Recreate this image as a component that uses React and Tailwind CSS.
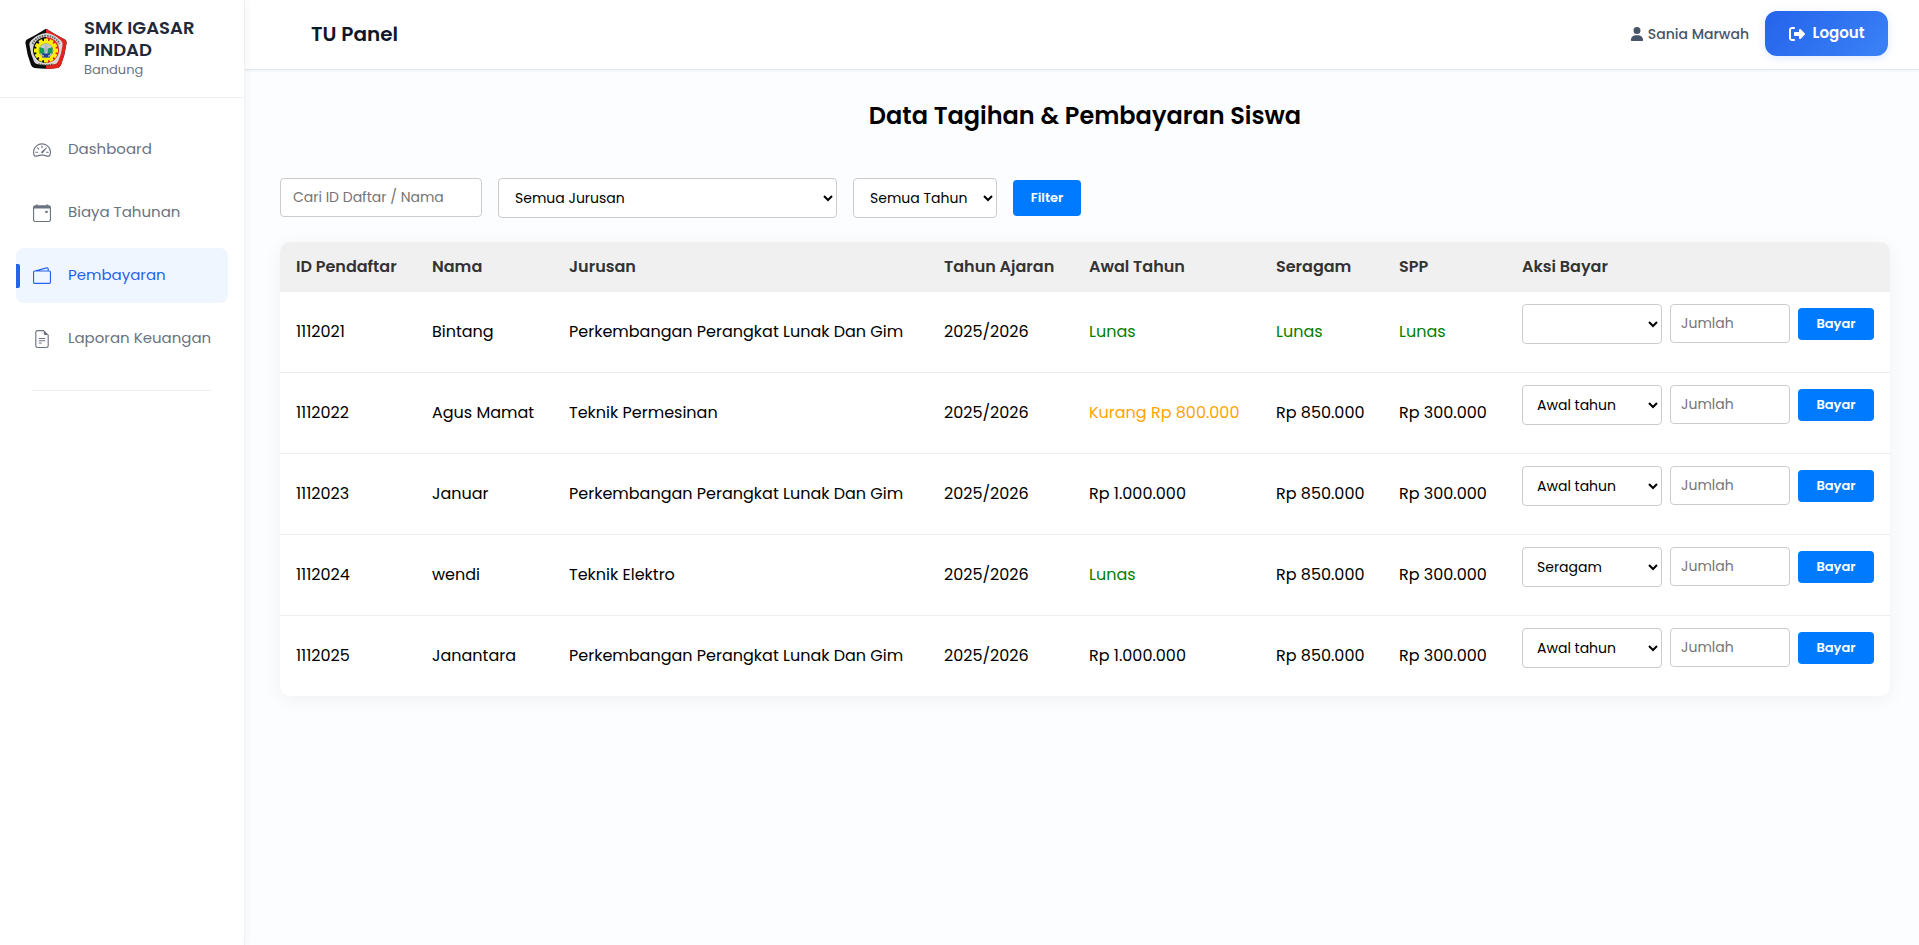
import { BsSpeedometer2, BsCalendarEvent, BsWallet2, BsFileEarmarkText } from "react-icons/bs";
import { FaUser, FaRightFromBracket } from "react-icons/fa6";

const menu = [
  { label: "Dashboard", icon: BsSpeedometer2 },
  { label: "Biaya Tahunan", icon: BsCalendarEvent },
  { label: "Pembayaran", icon: BsWallet2, active: true },
  { label: "Laporan Keuangan", icon: BsFileEarmarkText },
];

const columns = [
  { label: "ID Pendaftar", width: "w-[136px]" },
  { label: "Nama", width: "w-[137px]" },
  { label: "Jurusan", width: "w-auto" },
  { label: "Tahun Ajaran", width: "w-[145px]" },
  { label: "Awal Tahun", width: "w-[187px]" },
  { label: "Seragam", width: "w-[123px]" },
  { label: "SPP", width: "w-[123px]" },
  { label: "Aksi Bayar", width: "w-[384px]" },
];

const rows = [
  { id: "1112021", nama: "Bintang", jurusan: "Perkembangan Perangkat Lunak Dan Gim", awal: "Lunas", seragam: "Lunas", spp: "Lunas", jenis: "" },
  { id: "1112022", nama: "Agus Mamat", jurusan: "Teknik Permesinan", awal: "Kurang Rp 800.000", seragam: "Rp 850.000", spp: "Rp 300.000", jenis: "Awal tahun" },
  { id: "1112023", nama: "Januar", jurusan: "Perkembangan Perangkat Lunak Dan Gim", awal: "Rp 1.000.000", seragam: "Rp 850.000", spp: "Rp 300.000", jenis: "Awal tahun" },
  { id: "1112024", nama: "wendi", jurusan: "Teknik Elektro", awal: "Lunas", seragam: "Rp 850.000", spp: "Rp 300.000", jenis: "Seragam" },
  { id: "1112025", nama: "Janantara", jurusan: "Perkembangan Perangkat Lunak Dan Gim", awal: "Rp 1.000.000", seragam: "Rp 850.000", spp: "Rp 300.000", jenis: "Awal tahun" },
];

function statusColor(value) {
  if (value === "Lunas") return "text-[#008000]";
  if (value.startsWith("Kurang")) return "text-[#ffa500]";
  return "";
}

function Logo() {
  const teeth = [0, 30, 60, 90, 120, 150, 180, 210, 240, 270, 300, 330];
  return (
    <svg viewBox="0 0 88 88" className="size-11 shrink-0" aria-hidden="true">
      <path d="M44 6 Q46 5 50 9 Q66 19 82 27 Q86 29 85 35 Q82 58 74 78 Q72 83 67 84 Q44 87 21 84 Q16 83 14 78 Q6 58 3 35 Q2 29 6 27 Q22 19 38 9 Q42 5 44 6Z" fill="#0b0b0b" />
      <path d="M44 6 Q46 5 50 9 Q66 19 82 27 Q86 29 85 35 Q82 58 74 78 Q72 83 67 84 Q56 86 44 86Z" fill="#e0251f" />
      <path d="M44 14 Q60 15 74 29 Q78 33 77 39 Q75 56 68 71 Q66 75 62 76 Q44 80 26 76 Q22 75 20 71 Q13 56 11 39 Q10 33 14 29 Q28 15 44 14Z" fill="#d9d9d9" />
      <path d="M17 36 Q24 21 44 19 Q64 21 71 36" fill="none" stroke="#666" strokeWidth="4" strokeDasharray="3 2" />
      <path d="M29 76 Q44 80 59 76" fill="none" stroke="#555" strokeWidth="3" strokeDasharray="3 2" />
      <path d="M44 22 A26 26 0 0 0 44 74Z" fill="#0b0b0b" />
      <path d="M44 22 A26 26 0 0 1 44 74Z" fill="#e0251f" />
      <g fill="#f7ee0a">
        {teeth.map((a) => (
          <rect key={a} x="40" y="25" width="8" height="10" rx="1" transform={`rotate(${a} 44 49)`} />
        ))}
        <circle cx="44" cy="49" r="20" />
      </g>
      <circle cx="44" cy="49" r="14" fill="#c9ccd0" stroke="#8a8a50" strokeWidth="1" />
      <path d="M31 43 Q37 42 41 46 V57 Q36 54 31 55Z M57 43 Q51 42 47 46 V57 Q52 54 57 55Z" fill="#129a58" />
      <path d="M41 37 H47 V53 H41Z" fill="#aeb8c6" />
      <path d="M36 55 H52 V58 L48 59 V61 H52 V63 H36 V61 H40 V59 L36 58Z" fill="#25408f" />
    </svg>
  );
}

function Sidebar() {
  return (
    <aside className="z-10 w-[245px] shrink-0 border-r border-[#f0f1f3] bg-white shadow-[2px_0_8px_rgba(0,0,0,0.04)]">
      <div className="flex items-center gap-4 border-b border-[#f0f1f3] px-6 pt-[17px] pb-[18px]">
        <Logo />
        <div>
          <p className="text-lg leading-[22px] font-semibold text-[#1f2937]">SMK IGASAR PINDAD</p>
          <p className="text-[13px] leading-[18px] text-[#6b7280]">Bandung</p>
        </div>
      </div>
      <nav className="px-4 py-6">
        <ul className="flex flex-col gap-2">
          {menu.map(({ label, icon: Icon, active }) => (
            <li key={label}>
              <a
                href="#"
                aria-current={active ? "page" : undefined}
                className={
                  active
                    ? "relative flex h-[55px] items-center gap-4 rounded-lg bg-[#eff6ff] px-4 text-[#2563eb]"
                    : "relative flex h-[55px] items-center gap-4 rounded-lg px-4 text-[#6b7280]"
                }
              >
                {active && <span className="absolute left-0 h-6 w-1 rounded-r-xs bg-[#2563eb]" />}
                <span className="flex w-5 shrink-0 justify-center">
                  <Icon className="size-[18px]" />
                </span>
                <span className="text-[15px] whitespace-nowrap">{label}</span>
              </a>
            </li>
          ))}
        </ul>
        <hr className="mx-4 mt-6 border-[#f0f1f3]" />
      </nav>
    </aside>
  );
}

function Topbar() {
  return (
    <header className="flex h-[70px] items-center justify-between border-b border-[#e2e8f0] bg-white pr-[31px] pb-0.5 pl-[66px] shadow-[0_1px_3px_rgba(0,0,0,0.05)]">
      <h1 className="text-xl font-semibold text-[#0f172a]">TU Panel</h1>
      <div className="flex items-center gap-4">
        <span className="flex items-center gap-1 text-sm font-medium text-[#475569]">
          <FaUser className="size-3.5" />
          Sania Marwah
        </span>
        <button
          type="button"
          className="flex h-[45px] w-[123px] items-center justify-center gap-2 rounded-xl bg-linear-135 from-[#2563eb] to-[#3b82f6] text-[15px] font-semibold text-white shadow-[0_2px_8px_rgba(37,99,235,0.15)]"
        >
          <FaRightFromBracket className="size-4" />
          Logout
        </button>
      </div>
    </header>
  );
}

function Filters() {
  return (
    <form className="flex items-center gap-4">
      <input
        type="text"
        aria-label="Cari ID Daftar / Nama"
        placeholder="Cari ID Daftar / Nama"
        className="h-[39px] w-[202px] self-start rounded border border-[#cccccc] bg-white px-3 text-sm placeholder:text-[#757575]"
      />
      <select aria-label="Jurusan" className="h-10 w-[339px] rounded border border-[#cccccc] bg-white px-3 text-sm text-black">
        <option>Semua Jurusan</option>
        <option>Perkembangan Perangkat Lunak Dan Gim</option>
        <option>Teknik Permesinan</option>
        <option>Teknik Elektro</option>
      </select>
      <select aria-label="Tahun" className="h-10 w-36 rounded border border-[#cccccc] bg-white px-3 text-sm text-black">
        <option>Semua Tahun</option>
        <option>2025/2026</option>
      </select>
      <button type="submit" className="h-9 w-[68px] rounded bg-[#007bff] pb-px text-[13px] font-semibold text-white">
        Filter
      </button>
    </form>
  );
}

function PayForm({ row }) {
  return (
    <form className="mb-4 flex items-center gap-2">
      <select
        aria-label={`Jenis pembayaran ${row.nama}`}
        defaultValue={row.jenis}
        className="h-10 w-[140px] rounded border border-[#cccccc] bg-white px-2.5 text-sm text-black"
      >
        {row.jenis === "" ? (
          <option value=""></option>
        ) : (
          <>
            <option>Awal tahun</option>
            <option>Seragam</option>
            <option>SPP</option>
          </>
        )}
      </select>
      <input
        type="text"
        aria-label={`Jumlah ${row.nama}`}
        placeholder="Jumlah"
        className="h-[39px] w-[120px] self-start rounded border border-[#cccccc] bg-white px-2.5 text-sm placeholder:text-[#757575]"
      />
      <button type="submit" className="h-8 w-[76px] rounded bg-[#007bff] pb-px text-[13px] font-semibold text-white">
        Bayar
      </button>
    </form>
  );
}

function BillTable() {
  return (
    <div className="overflow-hidden rounded-[10px] bg-white shadow-[0_4px_20px_rgba(0,0,0,0.05)]">
      <table className="w-full table-fixed border-collapse text-left text-base text-black">
        <thead className="bg-[#f0f0f0] text-[#333333]">
          <tr className="border-b border-[#eeeeee]">
            {columns.map((c) => (
              <th key={c.label} scope="col" className={`${c.width} px-4 pt-[13px] pb-3 font-semibold whitespace-nowrap`}>
                {c.label}
              </th>
            ))}
          </tr>
        </thead>
        <tbody>
          {rows.map((r) => (
            <tr key={r.id} className="border-b border-[#eeeeee] whitespace-nowrap last:border-b-0">
              <td className="px-4 py-3">{r.id}</td>
              <td className="px-4 py-3">{r.nama}</td>
              <td className="px-4 py-3">{r.jurusan}</td>
              <td className="px-4 py-3">2025/2026</td>
              <td className={`px-4 py-3 ${statusColor(r.awal)}`}>{r.awal}</td>
              <td className={`px-4 py-3 ${statusColor(r.seragam)}`}>{r.seragam}</td>
              <td className={`px-4 py-3 ${statusColor(r.spp)}`}>{r.spp}</td>
              <td className="px-4 py-3">
                <PayForm row={r} />
              </td>
            </tr>
          ))}
        </tbody>
      </table>
    </div>
  );
}

export default function App() {
  return (
    <div className="flex min-h-screen bg-[#fcfdff] font-[Poppins,Inter,sans-serif]">
      <Sidebar />
      <div className="min-w-0 flex-1">
        <Topbar />
        <main className="flex flex-col pt-7 pr-[29px] pl-[35px]">
          <h2 className="mb-11 text-center text-2xl leading-9 font-semibold text-black">
            Data Tagihan &amp; Pembayaran Siswa
          </h2>
          <Filters />
          <div className="mt-6">
            <BillTable />
          </div>
        </main>
      </div>
    </div>
  );
}
